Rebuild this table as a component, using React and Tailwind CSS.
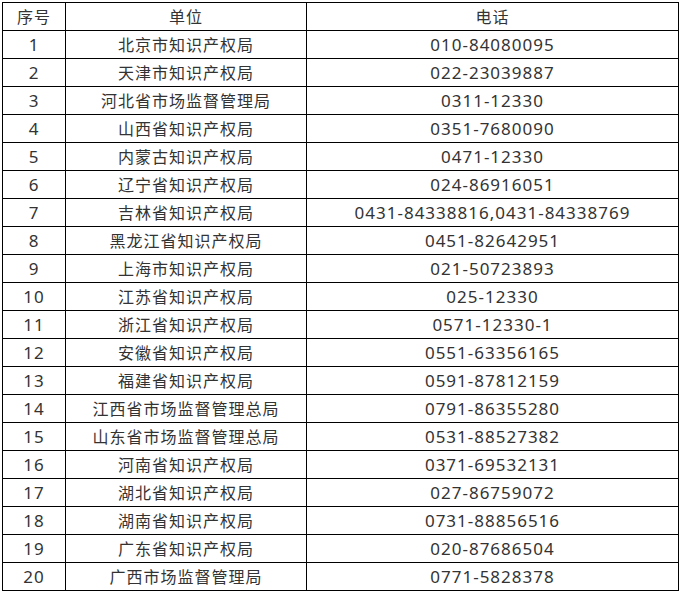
import React from 'react'

// 各省知识产权局联系电话
const rows = [
  ['1', '北京市知识产权局', '010-84080095'],
  ['2', '天津市知识产权局', '022-23039887'],
  ['3', '河北省市场监督管理局', '0311-12330'],
  ['4', '山西省知识产权局', '0351-7680090'],
  ['5', '内蒙古知识产权局', '0471-12330'],
  ['6', '辽宁省知识产权局', '024-86916051'],
  ['7', '吉林省知识产权局', '0431-84338816,0431-84338769'],
  ['8', '黑龙江省知识产权局', '0451-82642951'],
  ['9', '上海市知识产权局', '021-50723893'],
  ['10', '江苏省知识产权局', '025-12330'],
  ['11', '浙江省知识产权局', '0571-12330-1'],
  ['12', '安徽省知识产权局', '0551-63356165'],
  ['13', '福建省知识产权局', '0591-87812159'],
  ['14', '江西省市场监督管理总局', '0791-86355280'],
  ['15', '山东省市场监督管理总局', '0531-88527382'],
  ['16', '河南省知识产权局', '0371-69532131'],
  ['17', '湖北省知识产权局', '027-86759072'],
  ['18', '湖南省知识产权局', '0731-88856516'],
  ['19', '广东省知识产权局', '020-87686504'],
  ['20', '广西市场监督管理局', '0771-5828378'],
]

function Cell({ children, num }) {
  return (
    <div
      className={`bg-white flex items-center justify-center whitespace-nowrap ${num ? 'text-[17px]' : 'text-[16px]'}`}
    >
      {children}
    </div>
  )
}

export default function App() {
  return (
    <div className="w-[682px] h-[593px] bg-white pt-[2px] pl-[2px]">
      <div
        className="inline-grid grid-cols-[62px_240px_371px] auto-rows-[27px] gap-px bg-black p-px tracking-[1px] text-[#333]"
        style={{ fontFamily: '"Noto Sans", "Noto Sans CJK SC", sans-serif' }}
      >
        <Cell>序号</Cell>
        <Cell>单位</Cell>
        <Cell>电话</Cell>
        {rows.map(([no, unit, tel]) => (
          <React.Fragment key={no}>
            <Cell num>{no}</Cell>
            <Cell>{unit}</Cell>
            <Cell num>{tel}</Cell>
          </React.Fragment>
        ))}
      </div>
    </div>
  )
}
